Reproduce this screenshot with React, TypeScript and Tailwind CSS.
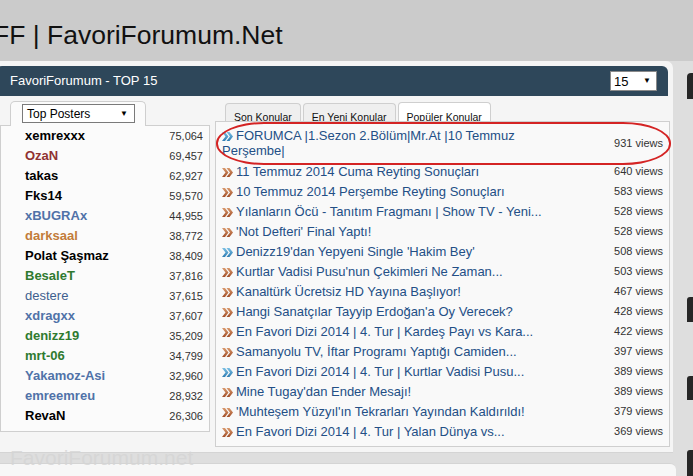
import React from 'react';

type Poster = { name: string; posts: string; color: string; bold?: boolean };
type Topic = { title: string; views: number; blue?: boolean };

const posters: Poster[] = [
  { name: 'xemrexxx', posts: '75,064', color: 'text-black' },
  { name: 'OzaN', posts: '69,457', color: 'text-[#903232]' },
  { name: 'takas', posts: '62,927', color: 'text-black' },
  { name: 'Fks14', posts: '59,570', color: 'text-black' },
  { name: 'xBUGRAx', posts: '44,955', color: 'text-[#5072a8]' },
  { name: 'darksaal', posts: '38,772', color: 'text-[#c27b3a]' },
  { name: 'Polat Şaşmaz', posts: '38,409', color: 'text-black' },
  { name: 'BesaleT', posts: '37,816', color: 'text-[#2f7a2f]' },
  { name: 'destere', posts: '37,615', color: 'text-[#3e5f8e]', bold: false },
  { name: 'xdragxx', posts: '37,607', color: 'text-[#5072a8]' },
  { name: 'denizz19', posts: '35,209', color: 'text-[#2f7a2f]' },
  { name: 'mrt-06', posts: '34,799', color: 'text-[#2f7a2f]' },
  { name: 'Yakamoz-Asi', posts: '32,960', color: 'text-[#5072a8]' },
  { name: 'emreemreu', posts: '28,932', color: 'text-[#5072a8]' },
  { name: 'RevaN', posts: '26,306', color: 'text-black' },
];

const topics: Topic[] = [
  { title: '11 Temmuz 2014 Cuma Reyting Sonuçları', views: 640 },
  { title: '10 Temmuz 2014 Perşembe Reyting Sonuçları', views: 583 },
  { title: 'Yılanların Öcü - Tanıtım Fragmanı | Show TV - Yeni...', views: 528 },
  { title: "'Not Defteri' Final Yaptı!", views: 528 },
  { title: "Denizz19'dan Yepyeni Single 'Hakim Bey'", views: 508, blue: true },
  { title: "Kurtlar Vadisi Pusu'nun Çekimleri Ne Zaman...", views: 503 },
  { title: 'Kanaltürk Ücretsiz HD Yayına Başlıyor!', views: 467 },
  { title: "Hangi Sanatçılar Tayyip Erdoğan'a Oy Verecek?", views: 428 },
  { title: 'En Favori Dizi 2014 | 4. Tur | Kardeş Payı vs Kara...', views: 422 },
  { title: 'Samanyolu TV, İftar Programı Yaptığı Camiden...', views: 397 },
  { title: 'En Favori Dizi 2014 | 4. Tur | Kurtlar Vadisi Pusu...', views: 389, blue: true },
  { title: "Mine Tugay'dan Ender Mesajı!", views: 389 },
  { title: "'Muhteşem Yüzyıl'ın Tekrarları Yayından Kaldırıldı!", views: 379 },
  { title: 'En Favori Dizi 2014 | 4. Tur | Yalan Dünya vs...', views: 369 },
];

function Arrows({ blue }: { blue?: boolean }) {
  const id = blue ? 'arw-blue' : 'arw-brown';
  return (
    <svg width="11" height="9" viewBox="0 0 11 9" className="inline-block align-[-1px] mr-[3px]">
      <defs>
        <linearGradient id={id} x1="0" y1="0" x2="0" y2="1">
          <stop offset="0" stopColor={blue ? '#7cc0e4' : '#d99a6e'} />
          <stop offset="1" stopColor={blue ? '#2f7db3' : '#a24e27'} />
        </linearGradient>
      </defs>
      <polygon points="0,0 3,0 6.5,4.5 3,9 0,9 3.5,4.5" fill={`url(#${id})`} />
      <polygon points="4.5,0 7.5,0 11,4.5 7.5,9 4.5,9 8,4.5" fill={`url(#${id})`} />
    </svg>
  );
}

function Caret() {
  return <span className="text-[8px] leading-none text-black">▼</span>;
}

export default function App() {
  return (
    <div className="relative w-[693px] h-[476px] overflow-hidden bg-[#dedede] font-['Liberation_Sans',Arial,sans-serif]">
      <div className="h-[61px] bg-[#cbcbcb] flex items-center">
        <h1 className="ml-[-7px] mt-[10px] text-[26.5px] leading-none text-[#111] whitespace-nowrap">
          FF | FavoriForumum.Net
        </h1>
      </div>

      <div className="flex h-[415px] overflow-hidden">
        <div className="w-[676px] flex flex-col">
          <div className="w-[673px] bg-[#f5f5f5] rounded-tr-[7px] pt-[5px] pb-[5px] border-b border-[#d4d4d4]">
            {/* header bar */}
            <div className="ml-[-4px] w-[672px] h-[30px] bg-[#2e475a] rounded-t-[6px] flex items-center justify-between pl-[14px] pr-[11px]">
              <span className="text-[13px] text-white">FavoriForumum - TOP 15</span>
              <div className="w-[47px] h-[20px] bg-white border border-[#8a8a8a] flex items-center justify-between pl-[3px] pr-[5px]">
                <span className="text-[13px] leading-none text-black">15</span>
                <Caret />
              </div>
            </div>

            <div className="flex gap-[5px] items-start">
              {/* top posters */}
              <div className="w-[210px] mt-[5px]">
                <div className="relative z-10 ml-[10px] w-[136px] h-[25px] -mb-px bg-[#fbfbfb] border border-b-0 border-[#cfcfcf] rounded-t-[5px] pl-[11px] pt-[2px]">
                  <div className="w-[113px] h-[19px] bg-white border border-[#7a7a7a] flex items-center justify-between pl-[4px] pr-[6px]">
                    <span className="text-[12px] leading-none text-black">Top Posters</span>
                    <Caret />
                  </div>
                </div>
                <div className="bg-[#fbfbfb] border border-[#cfcfcf] pb-[5px] pl-[24px] pr-[6px]">
                  {posters.map((p) => (
                    <div key={p.name} className="h-[20px] flex items-center justify-between">
                      <span className={`text-[13px] ${p.bold === false ? 'font-normal' : 'font-bold'} ${p.color}`}>
                        {p.name}
                      </span>
                      <span className="text-[11px] text-[#333]">{p.posts}</span>
                    </div>
                  ))}
                </div>
              </div>

              {/* topics */}
              <div className="w-[455px] mt-[6px]">
                <div className="flex gap-[2px] pl-[10px] h-[19px] items-end">
                  <div className="h-[18px] overflow-hidden bg-[#efefef] border border-b-0 border-[#cfcfcf] rounded-t-[4px] px-[8px]">
                    <span className="block pt-[8px] text-[10.5px] leading-none text-[#111]">Son Konular</span>
                  </div>
                  <div className="h-[18px] overflow-hidden bg-[#efefef] border border-b-0 border-[#cfcfcf] rounded-t-[4px] px-[8px]">
                    <span className="block pt-[8px] text-[10.5px] leading-none text-[#111]">En Yeni Konular</span>
                  </div>
                  <div className="h-[19px] overflow-hidden bg-white border border-b-0 border-[#cfcfcf] rounded-t-[4px] px-[8px]">
                    <span className="block pt-[9px] text-[10.5px] leading-none text-[#111]">Popüler Konular</span>
                  </div>
                </div>
                <div className="bg-[#f9f9f9] border border-[#cfcfcf] pt-[4px] pb-[5px] pl-[6px] pr-[6px]">
                  <div className="h-[35px] flex items-center">
                    <div className="w-[338px] text-[13px] leading-[14.5px] text-[#234f86]">
                      <Arrows blue />
                      FORUMCA |1.Sezon 2.Bölüm|Mr.At |10 Temmuz Perşembe|
                    </div>
                    <span className="ml-auto text-[11px] text-[#333]">931 views</span>
                  </div>
                  {topics.map((t, i) => (
                    <div key={i} className="h-[20px] flex items-center">
                      <div className="w-[338px] whitespace-nowrap text-[13px] leading-none text-[#234f86]">
                        <Arrows blue={t.blue} />
                        {t.title}
                      </div>
                      <span className="ml-auto text-[11px] text-[#333]">{t.views} views</span>
                    </div>
                  ))}
                </div>
              </div>
            </div>
          </div>

          <div className="mt-[10px] flex-1 bg-[#f7f7f7] border-t border-[#d4d4d4] rounded-tr-[6px] pt-[6px]">
            <span className="text-[13px] text-black">Yeni Eklenenler</span>
          </div>
        </div>

        {/* cut-off right sidebar */}
        <div className="flex-1 flex flex-col pl-[11px]">
          <div className="mt-[12px] h-[30px] bg-[#262626] rounded-tl-[4px]" />
          <div className="mt-[198px] h-[28px] bg-[#262626] rounded-tl-[3px]" />
          <div className="mt-[54px] h-[28px] bg-[#262626] rounded-tl-[3px]" />
          <div className="mt-[50px] h-[30px] bg-[#262626] rounded-tl-[3px]" />
        </div>
      </div>

      {/* highlight ring */}
      <div className="absolute left-[216px] top-[122px] w-[455px] h-[43px] border-2 border-[#d42424] rounded-[48px/21px] pointer-events-none" />

      {/* watermark */}
      <div className="absolute left-[10px] top-[447px] text-[21px] leading-none text-[#d4d4d4]/80 pointer-events-none">
        FavoriForumum.net
      </div>
    </div>
  );
}
